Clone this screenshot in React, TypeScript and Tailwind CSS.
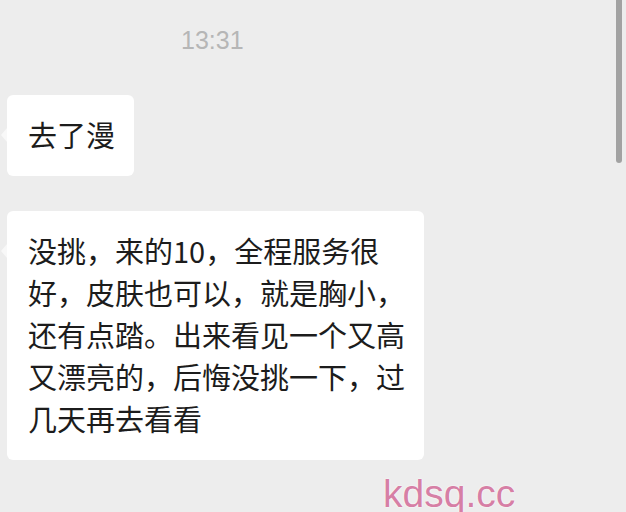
const CJK = "font-['Noto_Sans_CJK_SC','Noto_Sans',sans-serif]";

const LINES = [
  "没挑，来的10，全程服务很",
  "好，皮肤也可以，就是胸小，",
  "还有点踏。出来看见一个又高",
  "又漂亮的，后悔没挑一下，过",
  "几天再去看看",
];

function Bubble({ lines, width }: { lines: string[]; width: string }) {
  return (
    <div className={`relative ml-[7px] ${width} rounded-[6px] bg-white pl-[21px] pt-[18px] pb-[21px]`}>
      {/* little tail on the left */}
      <span className="absolute left-[-6px] top-[33px] h-0 w-0 border-y-[7px] border-r-[6px] border-y-transparent border-r-white opacity-60" />
      <p className={`${CJK} text-[29px] leading-[42px] text-[#1c1c1c] whitespace-nowrap`}>
        {lines.map((l, i) => (
          <span key={i} className="block">
            {l}
          </span>
        ))}
      </p>
    </div>
  );
}

export default function App() {
  return (
    <div className="relative h-[512px] w-[626px] overflow-hidden bg-[#ededed]">
      <div className="flex flex-col gap-[35px] pt-[27px]">
        <div className="mb-[7px] pl-[181px] font-['Liberation_Sans',Arial,sans-serif] text-[25px] leading-[26px] text-[#b6b6b6]">
          13:31
        </div>
        <Bubble lines={["去了漫"]} width="w-[127px]" />
        <Bubble lines={LINES} width="w-[417px]" />
      </div>

      {/* scrollbar */}
      <div className="absolute right-[4px] top-0 h-[163px] w-[6px] rounded-b-full bg-[#a2a2a2]" />

      {/* watermark */}
      <div className="absolute left-[383px] top-[474px] font-['Liberation_Sans',Arial,sans-serif] text-[39px] leading-none text-[#d67fa5] [text-shadow:0_0_2px_#fff,0_0_1px_#fff]">
        kdsq.cc
      </div>
    </div>
  );
}
